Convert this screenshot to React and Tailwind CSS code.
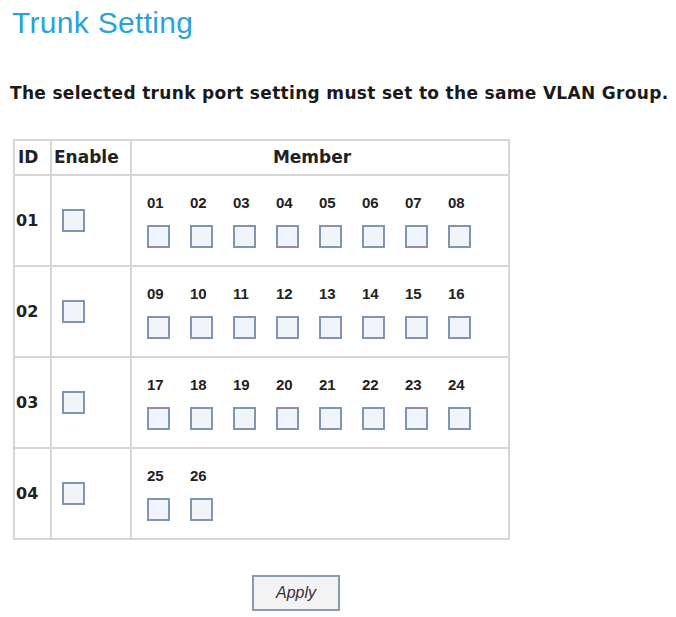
import { useState } from "react";

const GROUPS = [
  { id: "01", ports: ["01", "02", "03", "04", "05", "06", "07", "08"] },
  { id: "02", ports: ["09", "10", "11", "12", "13", "14", "15", "16"] },
  { id: "03", ports: ["17", "18", "19", "20", "21", "22", "23", "24"] },
  { id: "04", ports: ["25", "26"] },
];

const Box = ({ checked, onChange }) => (
  <input
    type="checkbox"
    checked={checked}
    onChange={onChange}
    className="appearance-none block w-[23px] h-[23px] border-2 border-[#7f95b1] bg-[#f1f4f8] m-0 cursor-pointer checked:bg-[#c9d9ea]"
  />
);

const App = () => {
  const [enabled, setEnabled] = useState({});
  const [members, setMembers] = useState({});

  const toggle = (setter, key) => setter((s) => ({ ...s, [key]: !s[key] }));

  return (
    <div className="w-[676px] h-[617px] bg-white pl-[12px] pt-[6px]" style={{ fontFamily: "'DejaVu Sans', sans-serif" }}>
      <h1 className="text-[30px] leading-[34px] text-[#2aa2da] font-normal tracking-[0.3px]" style={{ fontFamily: "'Liberation Sans', Arial, sans-serif" }}>
        Trunk Setting
      </h1>

      <p className="mt-[44px] -ml-[2px] text-[17px] leading-[18px] font-bold text-[#1a1a1a] tracking-[0.32px] whitespace-nowrap">
        The selected trunk port setting must set to the same VLAN Group.
      </p>

      <table className="mt-[37px] ml-[1px] border-collapse border-2 border-[#d6d6d6] w-[497px]">
        <thead>
          <tr className="h-[35px]">
            <th className="w-[37px] border-2 border-[#d6d6d6] text-[17px] font-bold text-[#222] text-left pl-[3px]">ID</th>
            <th className="w-[80px] border-2 border-[#d6d6d6] text-[17px] font-bold text-[#222] text-left pl-[2px]">Enable</th>
            <th className="border-2 border-[#d6d6d6] text-[17px] font-bold text-[#222] text-center pr-[16px]">Member</th>
          </tr>
        </thead>
        <tbody>
          {GROUPS.map((g) => (
            <tr key={g.id} className="h-[91px]">
              <td className="border-2 border-[#d6d6d6] text-[16px] font-bold text-[#222] pl-[1px] align-middle">{g.id}</td>
              <td className="border-2 border-[#d6d6d6] pl-[10px] align-middle">
                <Box checked={!!enabled[g.id]} onChange={() => toggle(setEnabled, g.id)} />
              </td>
              <td className="border-2 border-[#d6d6d6] pl-[15px] align-middle">
                <div className="flex">
                  {g.ports.map((p) => (
                    <div key={p} className="w-[43px] flex flex-col items-start">
                      <span
                        className="text-[15px] leading-[18px] font-bold text-[#222]"
                        style={{ fontFamily: "'Liberation Sans', Arial, sans-serif" }}
                      >
                        {p}
                      </span>
                      <div className="mt-[13px]">
                        <Box checked={!!members[p]} onChange={() => toggle(setMembers, p)} />
                      </div>
                    </div>
                  ))}
                </div>
              </td>
            </tr>
          ))}
        </tbody>
      </table>

      <button
        type="button"
        className="mt-[35px] ml-[240px] w-[88px] h-[36px] border-2 border-[#8a9ab0] bg-[#f3f3f3] text-[16px] text-[#333] italic"
        style={{ fontFamily: "'Liberation Sans', Arial, sans-serif" }}
      >
        Apply
      </button>
    </div>
  );
};

export default App;
